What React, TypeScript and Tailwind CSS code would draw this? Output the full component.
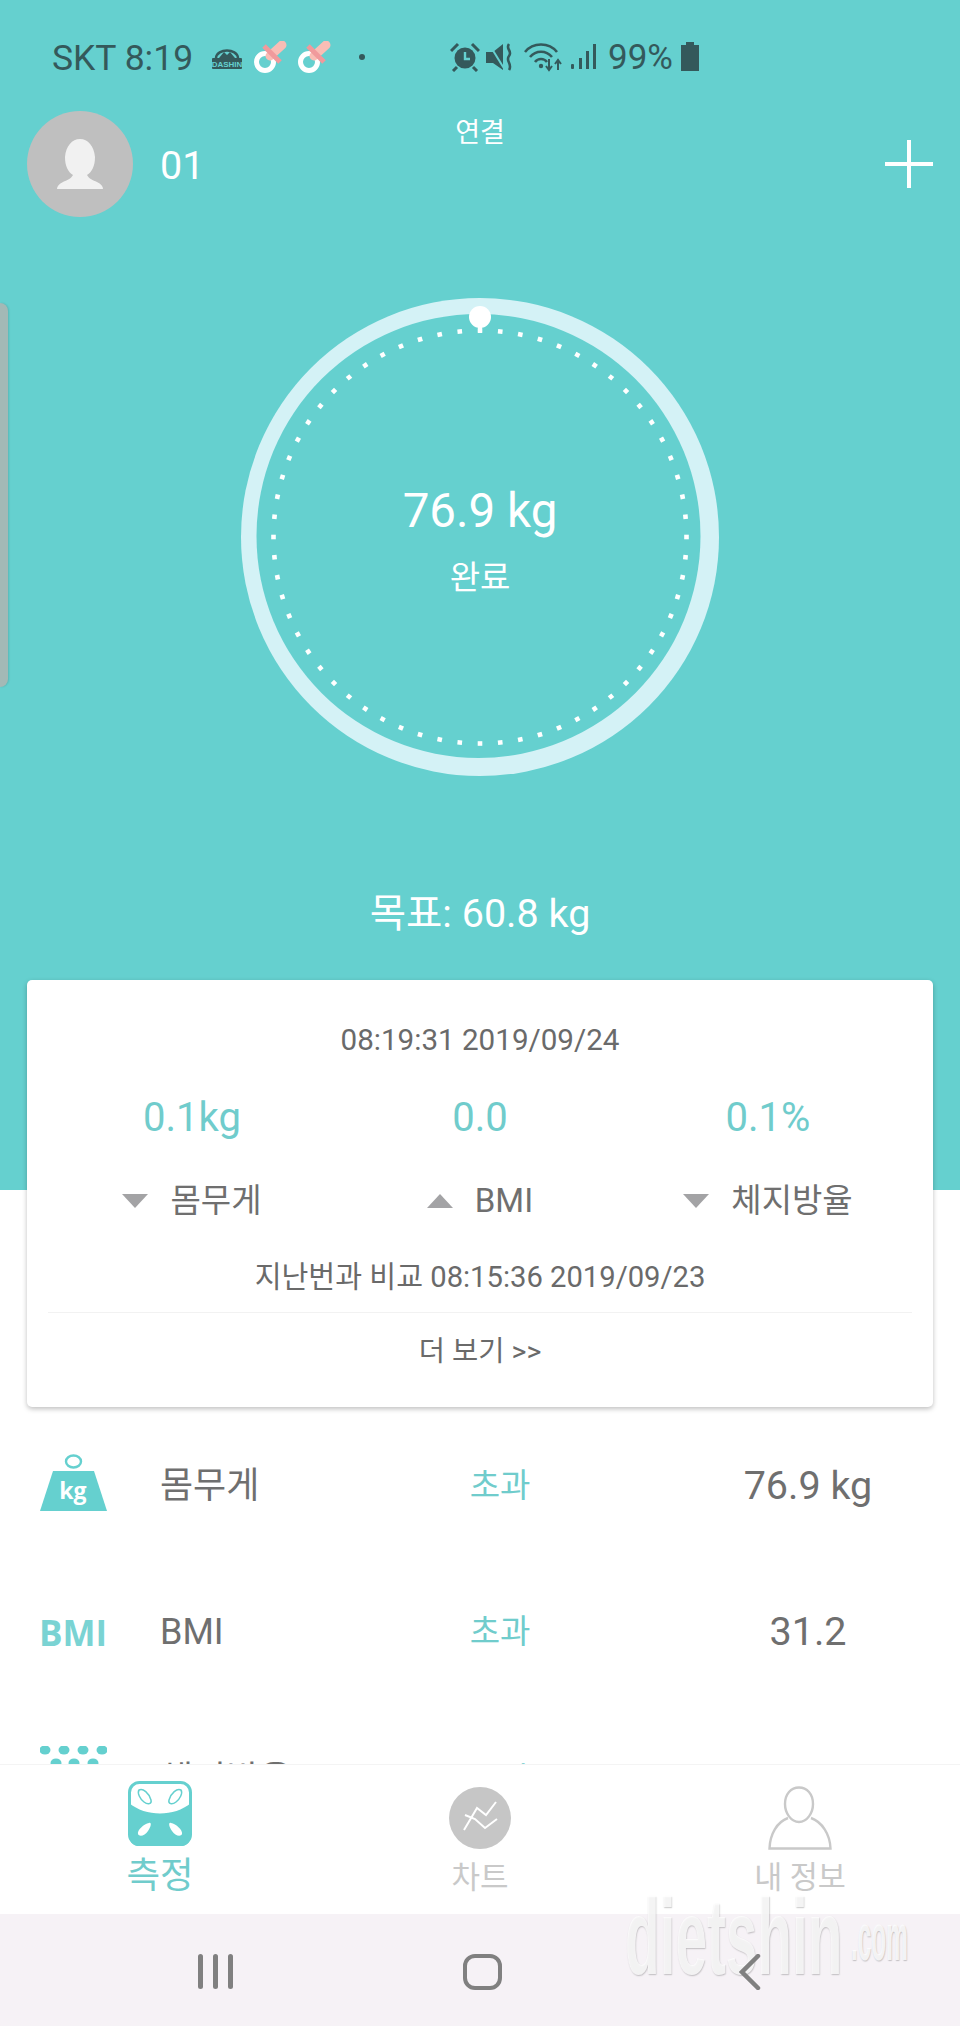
import React from "react";

const KR = "font-['Roboto','Noto_Sans_CJK_KR',sans-serif]";

function Pacifier() {
  return (
    <svg width="34" height="32" viewBox="0 0 34 32" className="shrink-0">
      <circle cx="11" cy="21" r="8.5" fill="none" stroke="#ffffff" strokeWidth="5" />
      <path d="M16 15 L28 4" stroke="#f9bdb5" strokeWidth="9" strokeLinecap="round" />
      <path d="M10 5 L26 21" stroke="#f09a9c" strokeWidth="5" />
    </svg>
  );
}

function StatusBar() {
  const c = "#34595b";
  return (
    <div className="flex h-[111px] items-start pl-[52px] pt-[42px] text-[#34595b]">
      <span className="-mt-[2px] w-[142px] text-[35.5px] leading-[36px] whitespace-nowrap">SKT 8:19</span>
      <svg width="32" height="26" viewBox="0 0 32 26" className="ml-[17px] mt-[2px] shrink-0">
        <path d="M5 14 C6 4 26 4 27 14" fill="none" stroke={c} strokeWidth="2.5" />
        <path d="M8 14 L13 8 L16 11 L19 8 L24 14 Z" fill={c} />
        <rect x="1" y="14" width="30" height="11" rx="1" fill={c} />
        <text x="16" y="23" textAnchor="middle" fontSize="8" fontWeight="700" fill="#65d0cf" fontFamily="Liberation Sans">DASHIN</text>
      </svg>
      <div className="ml-[11px] -mt-[1px] flex gap-[10px]">
        <Pacifier />
        <Pacifier />
      </div>
      <div className="ml-[27px] mt-[12px] h-[6px] w-[6px] rounded-full bg-[#34595b]" />
      <svg width="30" height="30" viewBox="0 0 30 30" className="ml-[85px] shrink-0">
        <circle cx="15" cy="16" r="10.5" fill={c} />
        <path d="M15 10 V17 H20" fill="none" stroke="#65d0cf" strokeWidth="2.4" />
        <path d="M1 9 L8 2 M29 9 L22 2 M7 25 L3 29 M23 25 L27 29" stroke={c} strokeWidth="3" />
      </svg>
      <svg width="28" height="30" viewBox="0 0 28 30" className="ml-[6px] shrink-0">
        <path d="M0 10 H7 L17 2 V28 L7 21 H0 Z" fill={c} />
        <path d="M3 2 L19 28" stroke="#65d0cf" strokeWidth="2" />
        <path d="M23 2 C19 7 27 9 23 14 C19 19 27 22 23 28" fill="none" stroke={c} strokeWidth="2.6" />
      </svg>
      <svg width="40" height="30" viewBox="0 0 40 30" className="ml-[10px] shrink-0">
        <path d="M1 10 C9 0 25 0 33 10 M6 15 C12 8 22 8 28 15 M11 20 C14 16 20 16 23 20" fill="none" stroke={c} strokeWidth="2.6" />
        <circle cx="17" cy="24" r="2.2" fill={c} />
        <path d="M25 17 V27 M22 24 L25 28 L28 24 M34 28 V19 M31 22 L34 18 L37 22" fill="none" stroke={c} strokeWidth="2" />
      </svg>
      <svg width="26" height="28" viewBox="0 0 26 28" className="ml-[6px] shrink-0">
        <rect x="1" y="22" width="3" height="5" rx="1" fill={c} />
        <rect x="9" y="16" width="3" height="11" fill={c} />
        <rect x="16" y="9" width="3" height="18" fill={c} />
        <rect x="23" y="2" width="3" height="25" fill={c} />
      </svg>
      <span className="ml-[12px] -mt-[2px] text-[35px] leading-[36px]">99%</span>
      <svg width="20" height="29" viewBox="0 0 20 29" className="ml-[7px] shrink-0">
        <path d="M6 0 H14 V3 H19 V29 H1 V3 H6 Z" fill={c} />
      </svg>
    </div>
  );
}

function Header() {
  return (
    <div className="grid h-[106px] grid-cols-[27px_1fr_auto_1fr_27px] items-start">
      <div />
      <div className="flex items-center">
        <div className="flex h-[106px] w-[106px] items-center justify-center rounded-full bg-[#bfbfbf]">
          <svg width="48" height="50" viewBox="0 0 48 50">
            <path
              d="M24 0 C32 0 38 7 39 18 C39 27 36 33 31 36 C33 40 37 41 41 43 C45 45 47 47 47 50 H1 C1 47 3 45 7 43 C11 41 15 40 17 36 C12 33 9 27 9 18 C10 7 16 0 24 0 Z"
              fill="#f1f1f1"
            />
          </svg>
        </div>
        <span className="ml-[27px] mt-[3px] text-[39.5px] leading-none text-white">01</span>
      </div>
      <span className="mt-[6px] text-center text-[27px] leading-[32px] text-white">연결</span>
      <div className="flex justify-end pt-[29px]">
        <svg width="48" height="48" viewBox="0 0 48 48">
          <path d="M24 0 V48 M0 24 H48" stroke="#ffffff" strokeWidth="4" />
        </svg>
      </div>
      <div />
    </div>
  );
}

function Gauge() {
  const dots = Array.from({ length: 64 }, (_, i) => (i * Math.PI * 2) / 64);
  return (
    <div className="relative mx-auto mt-[81px] h-[478px] w-[478px]">
      <svg width="478" height="478" viewBox="0 0 478 478">
        <circle cx="239" cy="239" r="239" fill="#d4f2f6" />
        <circle cx="237.5" cy="238" r="222" fill="#65d0cf" />
        {dots.map((a, i) => {
          const x = 239 + 206.5 * Math.sin(a);
          const y = 239 - 206.5 * Math.cos(a);
          return (
            <rect
              key={i}
              x={x - 2.3}
              y={y - 2.3}
              width="4.6"
              height="4.6"
              fill="#ffffff"
              transform={`rotate(${(a * 180) / Math.PI} ${x} ${y})`}
            />
          );
        })}
        <circle cx="239" cy="19" r="11" fill="#ffffff" />
        <rect x="237" y="26" width="4" height="9" fill="#ffffff" />
      </svg>
      <div className="absolute inset-0 flex flex-col items-center pt-[64px] text-white">
        <span className="mt-[121px] text-[47.5px] leading-[56px]">76.9 kg</span>
        <span className="mt-[17px] text-[33px] leading-[44px]">완료</span>
      </div>
    </div>
  );
}

function Delta({ value, label, up }: { value: string; label: string; up?: boolean }) {
  return (
    <div className="flex flex-col items-center">
      <span className="text-[40px] leading-[44px] text-[#70cccc]">{value}</span>
      <div className="mt-[39px] flex h-[44px] items-center gap-[22px]">
        <svg width="26" height="16" viewBox="0 0 26 16">
          <path d={up ? "M13 1 L26 15 H0 Z" : "M0 1 H26 L13 15 Z"} fill="#a3a3a5" />
        </svg>
        <span className="text-[33px] leading-[44px] text-[#6f6f6f]">{label}</span>
      </div>
    </div>
  );
}

function Card() {
  return (
    <div className="relative z-10 mx-[27px] mt-[44px] flex h-[427px] flex-col items-center rounded-[5px] bg-white shadow-[0_2px_5px_rgba(0,0,0,0.25)]">
      <span className="mt-[43px] text-[29.6px] leading-[34px] text-[#6a6a6a]">08:19:31 2019/09/24</span>
      <div className="mt-[39px] grid w-full grid-cols-3 px-[21px]">
        <Delta value="0.1kg" label="몸무게" />
        <Delta value="0.0" label="BMI" up />
        <Delta value="0.1%" label="체지방율" />
      </div>
      <span className="mt-[37px] text-[29.2px] leading-[34px] text-[#6a6a6a]">지난번과 비교 08:15:36 2019/09/23</span>
      <div className="mt-[18px] h-px w-[864px] bg-[#f2f2f2]" />
      <span className="mt-[22px] text-[28.5px] leading-[34px] text-[#6a6a6a]">더 보기 &gt;&gt;</span>
    </div>
  );
}

function Row({ icon, name, value }: { icon: React.ReactNode; name: string; value: string }) {
  return (
    <div className="grid h-[146px] shrink-0 grid-cols-[160px_300px_80px_198px_140px_1fr] items-center">
      <div className="flex justify-start pl-[40px]">{icon}</div>
      <span className="text-[36px] text-[#6f6f6f]">{name}</span>
      <span className="text-center text-[33px] text-[#70cccc]">초과</span>
      <span className="col-start-5 text-center text-[39.5px] whitespace-nowrap text-[#6f6f6f]">{value}</span>
    </div>
  );
}

function KgIcon() {
  return (
    <svg width="67" height="57" viewBox="0 0 67 57" className="-mt-[8px] overflow-visible">
      <ellipse cx="33.5" cy="7.5" rx="7.5" ry="6" fill="none" stroke="#65d0cf" strokeWidth="2.4" />
      <path d="M13 17 H54 L67 57 H0 Z" fill="#65d0cf" />
      <text x="33" y="45" textAnchor="middle" fontSize="23" fontWeight="700" fill="#ffffff" fontFamily="Open Sans">kg</text>
    </svg>
  );
}

function BmiIcon() {
  return <span className="-ml-[1px] font-['Open_Sans',sans-serif] text-[35px] leading-none font-bold text-[#7ad3d3]">BMI</span>;
}

function DotsIcon() {
  const rows = [
    { y: 4, xs: [5, 24, 43, 62] },
    { y: 17, xs: [16, 34, 53] },
    { y: 30, xs: [5, 24, 43, 62] },
  ];
  return (
    <svg width="67" height="68" viewBox="0 0 67 68">
      {rows.map((r) => r.xs.map((x) => <ellipse key={`${r.y}-${x}`} cx={x} cy={r.y} rx="5.5" ry="4.5" fill="#65d0cf" />))}
    </svg>
  );
}

function ScaleIcon() {
  return (
    <svg width="64" height="65" viewBox="0 0 64 65">
      <rect x="1.5" y="1.5" width="61" height="62" rx="10" fill="#ffffff" stroke="#65d0cf" strokeWidth="3" />
      <path d="M1 22 C18 36 46 36 63 22 V54 C63 60 59 65 53 65 H11 C5 65 1 60 1 54 Z" fill="#65d0cf" />
      <path d="M11 9 C15 7 21 12 23 19 C24 23 20 24 16 21 C12 18 9 12 11 9 Z" fill="none" stroke="#65d0cf" strokeWidth="1.5" />
      <path d="M53 9 C49 7 43 12 41 19 C40 23 44 24 48 21 C52 18 55 12 53 9 Z" fill="none" stroke="#65d0cf" strokeWidth="1.5" />
      <path d="M21 42 C24 41 23 46 20 50 C17 55 11 56 10 53 C9 49 16 43 21 42 Z" fill="#ffffff" />
      <path d="M43 42 C40 41 41 46 44 50 C47 55 53 56 54 53 C55 49 48 43 43 42 Z" fill="#ffffff" />
    </svg>
  );
}

function ChartIcon() {
  return (
    <svg width="62" height="62" viewBox="0 0 62 62">
      <circle cx="31" cy="31" r="31" fill="#c6c6c6" />
      <path d="M15 43 L28 21 L37 28 L47 15" fill="none" stroke="#ffffff" strokeWidth="2" />
      <path d="M16 28 L26 32 L36 41 L48 32" fill="none" stroke="#ffffff" strokeWidth="2" />
    </svg>
  );
}

function PersonIcon() {
  return (
    <svg width="64" height="64" viewBox="0 0 64 64">
      <path
        d="M31 1.5 C39 1.5 45 8 45 18 C45 27 39 36 31 36 C23 36 17 27 17 18 C17 8 23 1.5 31 1.5 Z"
        fill="none"
        stroke="#c9c9c9"
        strokeWidth="2.4"
      />
      <path d="M20 32 C9 36 2 48 1.5 62.5 H62.5 C62 48 54 36 43 32" fill="none" stroke="#c9c9c9" strokeWidth="2.4" />
    </svg>
  );
}

function BottomNav() {
  return (
    <div className="relative z-10 grid h-[150px] shrink-0 grid-cols-[320px_320px_320px] border-t border-[#f4f4f4] bg-white">
      <div className="flex flex-col items-center pt-[16px]">
        <ScaleIcon />
        <span className="mt-[6px] text-[36.5px] leading-[48px] text-[#70cccc]">측정</span>
      </div>
      <div className="flex flex-col items-center pt-[22px]">
        <ChartIcon />
        <span className="mt-[11px] text-[31px] leading-[36px] text-[#c9c9c9]">차트</span>
      </div>
      <div className="flex flex-col items-center pt-[21px]">
        <PersonIcon />
        <span className="mt-[10px] text-[30.5px] leading-[36px] text-[#c9c9c9]">내 정보</span>
      </div>
    </div>
  );
}

function SystemNav() {
  return (
    <div className="flex h-[112px] shrink-0 items-start bg-[#f6f2f6] pt-[40px]">
      <div className="ml-[198px] flex gap-[10px]">
        <div className="h-[35px] w-[5px] rounded-full bg-[#808080]" />
        <div className="h-[35px] w-[5px] rounded-full bg-[#808080]" />
        <div className="h-[35px] w-[5px] rounded-full bg-[#808080]" />
      </div>
      <div className="ml-[230px] h-[36px] w-[39px] rounded-[12px] border-[4px] border-[#808080]" />
      <svg width="22" height="36" viewBox="0 0 22 36" className="relative z-30 ml-[237px]">
        <path d="M19 2 L3 18 L19 34" fill="none" stroke="#808080" strokeWidth="4.5" strokeLinecap="round" />
      </svg>
    </div>
  );
}

export default function App() {
  return (
    <div className={`relative flex h-[2026px] w-[960px] flex-col overflow-hidden bg-white ${KR}`}>
      <div className="flex min-h-0 flex-1 flex-col overflow-hidden">
        <div className="relative h-[1190px] shrink-0 bg-[#65d0cf]">
          <div className="absolute left-0 top-[303px] h-[384px] w-[8px] rounded-r-[8px] bg-[#a3b9b6] shadow-[1px_0_2px_rgba(0,0,0,0.12)]" />
          <StatusBar />
          <Header />
          <Gauge />
          <div className="mt-[116px] text-center text-[39.5px] leading-[44px] text-white">목표: 60.8 kg</div>
          <Card />
        </div>
        <div className="mt-[223px] flex flex-col">
          <Row icon={<KgIcon />} name="몸무게" value="76.9 kg" />
          <Row icon={<BmiIcon />} name="BMI" value="31.2" />
          <div className="mt-[2px]">
            <Row icon={<DotsIcon />} name="체지방율" value="36.8 %" />
          </div>
        </div>
      </div>
      <BottomNav />
      <SystemNav />
      <div className="pointer-events-none absolute left-[625px] top-[1882px] z-20 flex items-end font-['Liberation_Sans',sans-serif] font-bold text-white/80 [text-shadow:1px_1px_2px_rgba(0,0,0,0.22)]">
        <span className="w-[226px] origin-bottom-left text-[107px] leading-[110px] whitespace-nowrap [transform:scaleX(0.53)]">dietshin</span>
        <span className="w-[62px] origin-bottom-left text-[66px] leading-[110px] whitespace-nowrap [transform:scaleX(0.37)]">.com</span>
      </div>
    </div>
  );
}
